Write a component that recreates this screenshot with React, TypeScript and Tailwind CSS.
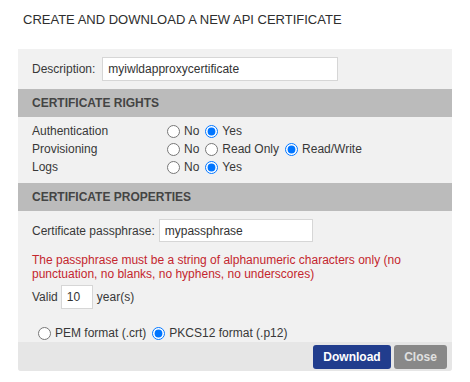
const font = { fontFamily: '"Liberation Sans", Arial, sans-serif' };

const Radio = ({ checked, label, name }: { checked?: boolean; label: string; name: string }) => (
  <label className="flex items-center">
    <input
      className="m-0 h-[13px] w-[13px]"
      defaultChecked={checked}
      name={name}
      type="radio"
    />
    <span className="ml-[4px] mr-[6px]">{label}</span>
  </label>
);

const SectionHeader = ({ title }: { title: string }) => (
  <div className="flex h-[28px] items-center bg-[#bbbbbb] px-[14px] text-[12px] font-bold text-[#444]">
    {title}
  </div>
);

const RightsRow = ({ label, name, options, value }: { label: string; name: string; options: string[]; value: string }) => (
  <div className="flex h-[18px] items-center">
    <div className="w-[135px]">{label}</div>
    {options.map((option) => (
      <Radio
        checked={option === value}
        key={option}
        label={option}
        name={name}
      />
    ))}
  </div>
);

export default function App() {
  return (
    <div
      className="h-[382px] w-[470px] bg-white text-[12px] leading-[14px] text-[#383838]"
      style={font}
    >
      <div className="px-[23px] pt-[12px] text-[13px] leading-[15px] text-[#2e2e2e]">
        CREATE AND DOWNLOAD A NEW API CERTIFICATE
      </div>

      <div className="mx-[18px] mt-[22px] overflow-hidden rounded-b-[3px] bg-[#f1f1f1]">
        <div className="flex items-center px-[14px] pb-[8px] pt-[8px]">
          <span className="mr-[7px]">Description:</span>
          <input
            className="h-[24px] w-[236px] border border-[#d6d6d6] bg-white px-[5px] text-[12px] text-[#333] outline-none"
            defaultValue="myiwldapproxycertificate"
            style={font}
          />
        </div>

        <SectionHeader title="CERTIFICATE RIGHTS" />
        <div className="px-[14px] pb-[7px] pt-[5px]">
          <RightsRow label="Authentication" name="auth" options={["No", "Yes"]} value="Yes" />
          <RightsRow label="Provisioning" name="prov" options={["No", "Read Only", "Read/Write"]} value="Read/Write" />
          <RightsRow label="Logs" name="logs" options={["No", "Yes"]} value="Yes" />
        </div>

        <SectionHeader title="CERTIFICATE PROPERTIES" />
        <div className="px-[14px] pt-[8px]">
          <div className="flex items-center">
            <span className="mr-[4px]">Certificate passphrase:</span>
            <input
              className="h-[23px] w-[154px] border border-[#d6d6d6] bg-white px-[5px] text-[12px] text-[#333] outline-none"
              defaultValue="mypassphrase"
              style={font}
            />
          </div>
          <p className="mt-[11px] text-[#c4262e]">
            The passphrase must be a string of alphanumeric characters only (no punctuation, no blanks, no hyphens, no underscores)
          </p>
          <div className="mt-[4px] flex items-center">
            <span className="mr-[3px]">Valid</span>
            <input
              className="h-[24px] w-[32px] border border-[#d6d6d6] bg-white px-[5px] text-[12px] text-[#333] outline-none"
              defaultValue="10"
              style={font}
            />
            <span className="ml-[4px]">year(s)</span>
          </div>
          <div className="mt-[15px] flex h-[18px] items-center pl-[6px]">
            <Radio label="PEM format (.crt)" name="format" />
            <Radio checked label="PKCS12 format (.p12)" name="format" />
          </div>
        </div>

        <div className="flex h-[29px] items-start justify-end gap-[3px] bg-[#e6e6e6] pr-[5px] pt-[3px]">
          <button className="h-[24px] w-[78px] rounded-[3px] bg-[#213d8d] text-[12px] font-bold text-white">
            Download
          </button>
          <button className="h-[24px] w-[53px] rounded-[3px] bg-[#888888] text-[12px] font-bold text-[#e0e0e0]">
            Close
          </button>
        </div>
      </div>
    </div>
  );
}
